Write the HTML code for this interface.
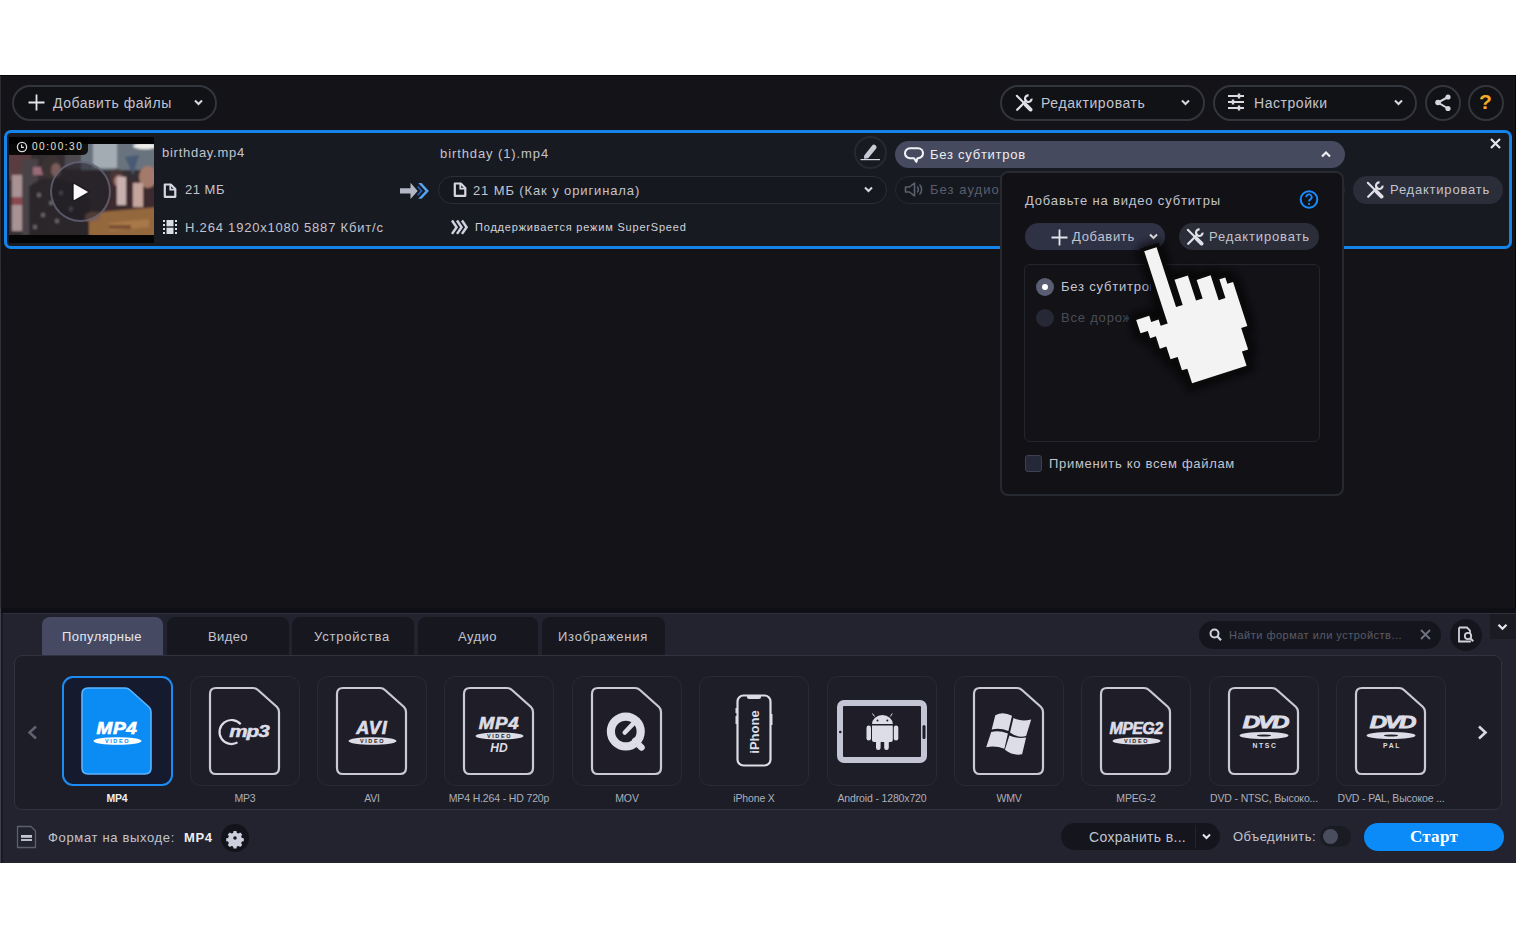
<!DOCTYPE html>
<html><head><meta charset="utf-8">
<style>
*{margin:0;padding:0;box-sizing:border-box}
html,body{width:1517px;height:939px;background:#fff;overflow:hidden;font-family:"Liberation Sans",sans-serif}
.a{position:absolute}
#app{position:absolute;left:0;top:75px;width:1516px;height:788px;background:#141418;border-top:1px solid #050506;border-right:1px solid #050506;overflow:hidden}
#app::before{content:"";position:absolute;left:0;top:0;width:1px;height:100%;background:linear-gradient(#2c2c32,#34363f)}
.t{position:absolute;white-space:nowrap;color:#c2c4cf;font-size:13px;line-height:16px}
.pill{position:absolute;border-radius:20px}
svg{position:absolute;overflow:visible}
</style></head><body>
<div id="app">
<!-- coordinates inside #app are page coords minus top 75 (border-top 1px handled via inner offset) -->
</div>
<!-- everything else absolutely positioned in page coords -->

<svg width="0" height="0" style="position:absolute"><defs>
<symbol id="tools" viewBox="0 0 18 18"><path d="M1.8 1.8L9.3 9.3" stroke="currentColor" stroke-width="2" stroke-linecap="round"/><path d="M10.8 10.8L15.6 15.6" stroke="currentColor" stroke-width="3.8" stroke-linecap="round"/><path d="M2.2 15.8L11.2 6.8" stroke="currentColor" stroke-width="2.3" stroke-linecap="round"/><path d="M16.6 4.6A3.3 3.3 0 1 1 13.6 1.4" stroke="currentColor" stroke-width="2.2" fill="none"/></symbol>
<symbol id="chev" viewBox="0 0 9 7"><path d="M1 1.5l3.5 3.5l3.5-3.5" stroke="currentColor" stroke-width="2" fill="none"/></symbol>
<symbol id="file" viewBox="0 0 14 15"><path d="M1.5 1.2h6.5l4.5 4.5v8h-11z" stroke="currentColor" stroke-width="1.7" fill="none" stroke-linejoin="round"/><path d="M7.5 1.2v5h5" stroke="currentColor" stroke-width="1.5" fill="none"/></symbol>
</defs></svg>
<div id="ov" class="a" style="left:0;top:0;width:1517px;height:939px">

<!-- TOOLBAR -->
<div class="pill" style="left:12px;top:85px;width:205px;height:36px;border:2px solid #33353c;background:#111216"></div>
<svg style="left:28px;top:94px" width="17" height="17"><path d="M8.5 0.5v16M0.5 8.5h16" stroke="#e4e5ec" stroke-width="1.8"/></svg>
<div class="t" style="left:53px;top:95px;font-size:14px;letter-spacing:0.55px">Добавить файлы</div>
<svg style="left:194px;top:99px" width="9" height="7"><path d="M1 1.5l3.5 3.5l3.5-3.5" stroke="#d8d9e0" stroke-width="2" fill="none"/></svg>

<div class="pill" style="left:1000px;top:85px;width:205px;height:36px;border:2px solid #33353c;background:#111216"></div>
<div class="t" style="left:1041px;top:95px;font-size:14px;letter-spacing:0.6px">Редактировать</div>
<svg style="left:1181px;top:99px" width="9" height="7"><path d="M1 1.5l3.5 3.5l3.5-3.5" stroke="#d8d9e0" stroke-width="2" fill="none"/></svg>

<div class="pill" style="left:1213px;top:85px;width:204px;height:36px;border:2px solid #33353c;background:#111216"></div>
<div class="t" style="left:1254px;top:95px;font-size:14px;letter-spacing:0.55px">Настройки</div>
<svg style="left:1394px;top:99px" width="9" height="7"><path d="M1 1.5l3.5 3.5l3.5-3.5" stroke="#d8d9e0" stroke-width="2" fill="none"/></svg>

<div class="pill" style="left:1425px;top:85px;width:36px;height:36px;border:2px solid #33353c;background:#111216"></div>
<div class="pill" style="left:1468px;top:85px;width:36px;height:36px;border:2px solid #33353c;background:#111216"></div>
<div class="t" style="left:1479px;top:91px;font-size:21px;line-height:22px;font-weight:bold;color:#f2aa2a">?</div>


<svg style="left:1015px;top:94px;color:#dfe0e8" width="18" height="18"><use href="#tools"/></svg>
<svg style="left:1227px;top:93px" width="18" height="17"><path d="M1 3h16M1 9h16M1 15h16" stroke="#d8d9e2" stroke-width="2.2"/><path d="M12 0.5v5M6 6.5v5M12 12.5v5" stroke="#d8d9e2" stroke-width="2.4"/></svg>
<svg style="left:1434px;top:94px" width="18" height="18"><path d="M14 3L4 8.5L14 14.5" stroke="#d4d5de" stroke-width="2" fill="none"/><circle cx="14" cy="3" r="2.6" fill="#d4d5de"/><circle cx="4" cy="8.5" r="2.8" fill="#d4d5de"/><circle cx="14" cy="14.5" r="2.6" fill="#d4d5de"/></svg>
<svg style="left:1392px;top:91px;color:#e6e7ee;position:absolute" width="0" height="0"></svg>
<!-- FILE ROW -->
<!--ROWBOX-->
<div class="a" style="left:4px;top:130px;width:1508px;height:119px;border:3px solid #1683ea;border-radius:7px;background:#181a22"></div>

<!-- thumbnail -->
<div class="a" style="left:9px;top:137px;width:145px;height:106px;background:#050505;overflow:hidden">
<svg style="left:0;top:0" width="145" height="106"><defs><filter id="tb" x="-10%" y="-10%" width="120%" height="120%"><feGaussianBlur stdDeviation="1.3"/></filter><clipPath id="tc"><rect x="0" y="7" width="145" height="91"/></clipPath></defs>
<g clip-path="url(#tc)"><g filter="url(#tb)">
<rect x="-5" y="0" width="155" height="110" fill="#352e31"/>
<rect x="72" y="0" width="78" height="33" fill="#69737e"/>
<rect x="84" y="4" width="24" height="27" fill="#a3abb3"/>
<rect x="56" y="8" width="16" height="24" fill="#4e4a50"/>
<ellipse cx="136" cy="9" rx="12" ry="3.2" fill="#ecece8"/>
<rect x="-2" y="15" width="24" height="28" fill="#5a3c40"/>
<rect x="3" y="38" width="10" height="56" fill="#a89294"/>
<rect x="3" y="60" width="10" height="8" fill="#8a4a50"/>
<rect x="13" y="22" width="16" height="76" fill="#4a4347"/>
<rect x="24" y="30" width="10" height="8" fill="#9a6a78"/>
<path d="M20 50Q28 40 50 42Q72 46 80 62L84 100H20Z" fill="#29272b"/>
<g fill="#66666a"><circle cx="30" cy="58" r="2.2"/><circle cx="42" cy="66" r="2.2"/><circle cx="34" cy="78" r="2.2"/><circle cx="52" cy="56" r="2.2"/><circle cx="48" cy="84" r="2.2"/><circle cx="62" cy="72" r="2.2"/><circle cx="26" cy="90" r="2.2"/></g>
<ellipse cx="42" cy="30" rx="10" ry="12" fill="#3a3030"/>
<ellipse cx="47" cy="33" rx="5" ry="7" fill="#7a5c58"/>
<rect x="96" y="44" width="50" height="36" fill="#3c2c2f"/>
<ellipse cx="108" cy="40" rx="7" ry="8" fill="#4a3636"/>
<ellipse cx="110" cy="44" rx="5" ry="6" fill="#a87a74"/>
<rect x="108" y="40" width="9" height="28" fill="#c9b0b0"/>
<path d="M116 20L130 18L124 38Z" fill="#4a5a74"/>
<ellipse cx="139" cy="40" rx="9" ry="11" fill="#a47a6c"/>
<rect x="124" y="46" width="10" height="24" fill="#c4a49c"/>
<path d="M80 76L150 70V100H80Z" fill="#94673c"/>
<path d="M100 86L140 82V90L100 94Z" fill="#a8784a"/>
<rect x="100" y="88" width="22" height="4" fill="#7a5030"/>
<ellipse cx="84" cy="80" rx="8" ry="5" fill="#86604a"/>
</g></g>
</svg>
  <div class="a" style="left:0;top:0;width:79px;height:18px;background:rgba(0,0,0,0.85);border-radius:0 0 5px 0"></div>
  <svg style="left:7px;top:4px" width="12" height="12"><circle cx="6" cy="6" r="4.6" stroke="#dcdcdc" stroke-width="1.3" fill="none"/><path d="M5.6 3.4v3h2.4" stroke="#dcdcdc" stroke-width="1.2" fill="none"/></svg>
  <div class="t" style="left:23px;top:3px;font-size:10px;line-height:14px;letter-spacing:1.55px;color:#eae4d8">00:00:30</div>
  <div class="a" style="left:41px;top:24px;width:61px;height:61px;border-radius:50%;background:rgba(28,26,34,0.5);border:2px solid rgba(120,118,140,0.65)"></div>
  <svg style="left:62px;top:44px" width="22" height="22"><path d="M2.5 2.5L17.5 11L2.5 19.5Z" fill="#fafafa" stroke="rgba(0,0,0,0.35)" stroke-width="2.5" stroke-linejoin="round"/><path d="M3.5 4L15.5 11L3.5 18Z" fill="#fafafa" stroke="#fafafa" stroke-width="1.2" stroke-linejoin="round"/></svg>
</div>

<div class="t" style="left:162px;top:145px;letter-spacing:0.73px">birthday.mp4</div>
<svg style="left:163px;top:183px" width="14" height="15"><path d="M1.8 1.5h6l4.5 4.5v7.8h-10.5z" stroke="#d6d7e2" stroke-width="2.2" fill="none" stroke-linejoin="round"/><path d="M7.3 1.5v5.2h5" stroke="#d6d7e2" stroke-width="1.8" fill="none"/></svg>
<div class="t" style="left:185px;top:182px;letter-spacing:0.5px">21 МБ</div>
<svg style="left:163px;top:220px" width="14" height="14"><path d="M0 0h2v2h-2zM0 4h2v2h-2zM0 8h2v2h-2zM0 12h2v2h-2zM12 0h2v2h-2zM12 4h2v2h-2zM12 8h2v2h-2zM12 12h2v2h-2z" fill="#dcdde6"/><rect x="3.5" y="0" width="7" height="6.3" fill="#dcdde6"/><rect x="3.5" y="7.7" width="7" height="6.3" fill="#dcdde6"/></svg>
<div class="t" style="left:185px;top:220px;letter-spacing:0.8px">H.264 1920x1080 5887 Кбит/с</div>

<!-- arrow -->
<svg style="left:399px;top:181px" width="32" height="19"><path d="M1 7.2h10.5v-5.5l7.2 8.2l-7.2 8.2v-5.5h-10.5z" fill="#b4b7c6"/><path d="M19.2 2h3.4l7.3 7.9l-7.3 7.9h-3.4l7.3-7.9z" fill="#56a4f0"/><path d="M18.6 5.5l4 4.4l-4 4.4" stroke="#1f64c0" stroke-width="1.6" fill="none"/></svg>

<div class="t" style="left:440px;top:146px;letter-spacing:0.9px">birthday (1).mp4</div>
<div class="pill" style="left:438px;top:176px;width:449px;height:28px;border:1.5px solid #2b2e37;background:#16181f"></div>
<svg style="left:453px;top:182px" width="14" height="15"><path d="M1.8 1.5h6l4.5 4.5v7.8h-10.5z" stroke="#d6d7e2" stroke-width="2.2" fill="none" stroke-linejoin="round"/><path d="M7.3 1.5v5.2h5" stroke="#d6d7e2" stroke-width="1.8" fill="none"/></svg>
<div class="t" style="left:473px;top:183px;letter-spacing:0.88px">21 МБ (Как у оригинала)</div>
<svg style="left:864px;top:186px" width="9" height="7"><path d="M1 1.5l3.5 3.5l3.5-3.5" stroke="#d8d9e0" stroke-width="2" fill="none"/></svg>

<svg style="left:450px;top:219px" width="19" height="16"><path d="M2 1.5l4.6 6.7l-4.6 6.7M7 1.5l4.6 6.7l-4.6 6.7M12 1.5l4.6 6.7l-4.6 6.7" stroke="#d0d1de" stroke-width="2.5" fill="none"/></svg>
<div class="t" style="left:475px;top:219px;font-size:11px;letter-spacing:0.8px;color:#d0d2dc">Поддерживается режим SuperSpeed</div>

<!-- pen button -->
<div class="pill" style="left:854px;top:136px;width:33px;height:33px;border:2px solid #272932;background:#181a22"></div>
<svg style="left:858px;top:141px" width="26" height="22"><path d="M6.2 14.6L14.2 4.6a2.2 2.2 0 0 1 3.2-0.3l0.3 0.3a2.2 2.2 0 0 1 0.3 3.2L10.2 17.2L6 17.8z" fill="#c8cad6"/><path d="M2.5 18.6h19.5" stroke="#d4d6e0" stroke-width="1.2"/></svg>

<!-- subtitles pill (open) -->
<div class="pill" style="left:895px;top:141px;width:450px;height:27px;background:#464a5e"></div>
<svg style="left:903px;top:146px" width="22" height="18"><path d="M7 2.2h8a5 5 0 0 1 0 10h-0.5l-1.2 3.6l-2.3-3.6h-4a5 5 0 0 1 0-10z" stroke="#f2f3f6" stroke-width="2.1" fill="none" stroke-linejoin="round"/></svg>
<div class="t" style="left:930px;top:147px;letter-spacing:0.75px;color:#eceef4">Без субтитров</div>
<svg style="left:1321px;top:151px" width="10" height="7"><path d="M1 5.5l4-4l4 4" stroke="#f0f0f4" stroke-width="2.2" fill="none"/></svg>

<!-- audio pill -->
<div class="pill" style="left:895px;top:176px;width:450px;height:28px;border:1.5px solid #272a33;background:#16181f"></div>
<svg style="left:904px;top:182px" width="19" height="15"><path d="M1.5 5h4l5-4v13l-5-4h-4z" stroke="#5c5f6c" stroke-width="1.6" fill="none" stroke-linejoin="round"/><path d="M13 4.5a4 4 0 0 1 0 6M15.5 2.5a7 7 0 0 1 0 10" stroke="#5c5f6c" stroke-width="1.5" fill="none"/></svg>
<div class="t" style="left:930px;top:182px;letter-spacing:1.05px;color:#5b5e6a">Без аудио</div>

<!-- close X -->
<svg style="left:1490px;top:138px" width="11" height="11"><path d="M1 1l9 9M10 1l-9 9" stroke="#e4e5ec" stroke-width="2.2"/></svg>

<!-- edit pill right -->
<div class="pill" style="left:1353px;top:176px;width:150px;height:28px;background:#2b2d39"></div>
<svg style="left:1366px;top:181px;color:#dfe0e8" width="18" height="18"><use href="#tools"/></svg>
<div class="t" style="left:1390px;top:182px;letter-spacing:0.78px">Редактировать</div>

<!-- POPUP -->
<div class="a" style="left:1000px;top:171px;width:344px;height:325px;border:2px solid #282a31;border-radius:8px;background:#111116"></div>
<div class="t" style="left:1025px;top:193px;letter-spacing:0.84px;color:#c2c4cf">Добавьте на видео субтитры</div>
<svg style="left:1298px;top:189px" width="22" height="22"><circle cx="11" cy="10.5" r="8.3" stroke="#1a8cff" stroke-width="2" fill="none"/><path d="M8.3 8.2a2.7 2.7 0 1 1 3.8 2.4c-0.8 0.4-1.1 0.9-1.1 1.8" stroke="#1a8cff" stroke-width="1.8" fill="none"/><circle cx="11" cy="15" r="1.1" fill="#1a8cff"/></svg>

<div class="pill" style="left:1025px;top:223px;width:140px;height:27px;background:#2f3245"></div>
<svg style="left:1051px;top:229px" width="17" height="17"><path d="M8.5 0.5v16M0.5 8.5h16" stroke="#e4e5ec" stroke-width="1.8"/></svg>
<div class="t" style="left:1072px;top:229px;letter-spacing:0.69px">Добавить</div>
<svg style="left:1149px;top:233px" width="9" height="7"><path d="M1 1.5l3.5 3.5l3.5-3.5" stroke="#e8e9ee" stroke-width="2" fill="none"/></svg>

<div class="pill" style="left:1179px;top:223px;width:140px;height:27px;background:#2b2d39"></div>
<svg style="left:1186px;top:228px;color:#dfe0e8" width="18" height="18"><use href="#tools"/></svg>
<div class="t" style="left:1209px;top:229px;letter-spacing:0.86px">Редактировать</div>

<div class="a" style="left:1024px;top:264px;width:296px;height:178px;border:1.5px solid #24262d;border-radius:6px;background:#121217"></div>
<div class="a" style="left:1036px;top:278px;width:18px;height:18px;border-radius:50%;background:#5a5e72"></div>
<div class="a" style="left:1042px;top:284px;width:6px;height:6px;border-radius:50%;background:#fff"></div>
<div class="t" style="left:1061px;top:279px;width:90px;overflow:hidden;letter-spacing:0.8px;color:#c4c6d2">Без субтитров</div>
<div class="a" style="left:1036px;top:309px;width:18px;height:18px;border-radius:50%;background:#262935"></div>
<div class="t" style="left:1061px;top:310px;width:68px;overflow:hidden;letter-spacing:0.8px;color:#4a4d58">Все дорожки</div>

<div class="a" style="left:1025px;top:455px;width:17px;height:17px;border-radius:3px;border:1.5px solid #3d4050;background:#252838"></div>
<div class="t" style="left:1049px;top:456px;letter-spacing:0.69px;color:#c2c4cf">Применить ко всем файлам</div>


<!-- BOTTOM PANEL -->
<div class="a" style="left:0;top:608px;width:1516px;height:5px;background:#0d0f15"></div>
<div class="a" style="left:0;top:613px;width:1516px;height:250px;background:#22232e;border-top:1px solid #2f313b"></div>
<div class="a" style="left:0;top:608px;width:1px;height:255px;background:#3c3e4a"></div><div class="a" style="left:1px;top:613px;width:2px;height:250px;background:#1a1b22"></div>

<!-- tabs -->
<div class="a" style="left:42px;top:617px;width:121px;height:40px;border-radius:8px 8px 0 0;background:#454a62"></div>
<div class="a" style="left:167px;top:617px;width:122px;height:40px;border-radius:8px 8px 0 0;background:#17181f"></div>
<div class="a" style="left:292px;top:617px;width:122px;height:40px;border-radius:8px 8px 0 0;background:#17181f"></div>
<div class="a" style="left:418px;top:617px;width:120px;height:40px;border-radius:8px 8px 0 0;background:#17181f"></div>
<div class="a" style="left:542px;top:617px;width:123px;height:40px;border-radius:8px 8px 0 0;background:#17181f"></div>
<div class="t" style="left:62px;top:629px;letter-spacing:0.45px;color:#e6e7ef">Популярные</div>
<div class="t" style="left:208px;top:629px;letter-spacing:0.4px;color:#c2c4cf">Видео</div>
<div class="t" style="left:314px;top:629px;letter-spacing:0.8px;color:#c2c4cf">Устройства</div>
<div class="t" style="left:458px;top:629px;letter-spacing:0.47px;color:#c2c4cf">Аудио</div>
<div class="t" style="left:558px;top:629px;letter-spacing:0.75px;color:#c2c4cf">Изображения</div>

<!-- search -->
<div class="pill" style="left:1199px;top:621px;width:242px;height:28px;background:#15161d"></div>
<svg style="left:1209px;top:628px" width="13" height="14"><circle cx="5.5" cy="5.5" r="4" stroke="#d0d1da" stroke-width="2" fill="none"/><path d="M8.5 8.5l3.5 3.8" stroke="#d0d1da" stroke-width="2.2"/></svg>
<div class="t" style="left:1229px;top:627px;font-size:11px;letter-spacing:0.49px;color:#585b68">Найти формат или устройств...</div>
<svg style="left:1420px;top:629px" width="11" height="11"><path d="M1 1l9 9M10 1l-9 9" stroke="#707380" stroke-width="1.8"/></svg>
<div class="pill" style="left:1450px;top:619px;width:32px;height:32px;background:#15161d"></div>
<svg style="left:1457px;top:626px" width="19" height="18"><path d="M2 1.5h8l3 3v3M13 14.5v1h-11v-14" stroke="#d0d1da" stroke-width="1.8" fill="none"/><circle cx="11" cy="10" r="3.2" stroke="#d0d1da" stroke-width="1.8" fill="none"/><path d="M13.3 12.3l3 3" stroke="#d0d1da" stroke-width="2"/></svg>
<div class="a" style="left:1490px;top:614px;width:26px;height:25px;background:#1a1b23"></div>
<svg style="left:1497px;top:623px;color:#e6e7ee" width="11" height="8"><use href="#chev"/></svg>

<!-- format panel -->
<div class="a" style="left:14px;top:655px;width:1488px;height:155px;border:1.5px solid #30323d;border-radius:8px;background:#1c1d26"></div>
<svg style="left:26px;top:725px" width="12" height="15"><path d="M10 1.5L3.5 7.5L10 13.5" stroke="#5f6270" stroke-width="2.6" fill="none"/></svg>
<svg style="left:1477px;top:725px" width="12" height="15"><path d="M2 1.5L8.5 7.5L2 13.5" stroke="#d8d9e2" stroke-width="2.6" fill="none"/></svg>

<!-- TILES -->
<div class="a" style="left:62px;top:676px;width:111px;height:110px;border:2px solid #1d8cf2;border-radius:11px;background:#151a2e"></div>
<svg style="left:81px;top:687px" width="72" height="89"><g transform="translate(1 1)"><path d="M6 0H43Q46 0 48 2L67 19Q69 21 69 24V80Q69 86 63 86H6Q0 86 0 80V6Q0 0 6 0Z" fill="#0b8cf5" stroke="#5cb4ff" stroke-width="1.6"/><text x="35" y="46" font-family="Liberation Sans" font-weight="bold" font-style="italic" font-size="17" text-anchor="middle" fill="#fff" stroke="#fff" stroke-width="0.7" letter-spacing="0.6" transform="translate(35 0) scale(1.12 1) translate(-35 0)">MP4</text><ellipse cx="35.5" cy="53" rx="24" ry="3.8" fill="#fff"/><text x="35.5" y="55" font-family="Liberation Sans" font-weight="bold" font-size="5.5" letter-spacing="1.6" text-anchor="middle" fill="#0a8cf5">VIDEO</text></g></svg>
<div class="t" style="left:52px;top:791px;width:130px;text-align:center;font-size:10.5px;line-height:14px;letter-spacing:-0.15px;font-weight:bold;color:#eeeff4">MP4</div>
<div class="a" style="left:190px;top:676px;width:110px;height:110px;border:1.5px solid #282a34;border-radius:11px;background:#1d1e27"></div>
<svg style="left:209px;top:687px" width="72" height="89"><g transform="translate(1 1)"><path d="M6 0H43Q46 0 48 2L67 19Q69 21 69 24V80Q69 86 63 86H6Q0 86 0 80V6Q0 0 6 0Z" fill="#1f1d27" stroke="#c9cad6" stroke-width="2.2"/><path d="M27.5 54.4A12 12 0 1 1 30.7 36.3" stroke="#dcdde6" stroke-width="2.2" fill="none"/><text x="39" y="49.5" font-family="Liberation Sans" font-weight="bold" font-style="italic" font-size="17" text-anchor="middle" fill="#dcdde6" stroke="#dcdde6" stroke-width="0.5" letter-spacing="-0.8" transform="translate(39 0) scale(1.22 1) translate(-39 0)">mp3</text></g></svg>
<div class="t" style="left:180px;top:791px;width:130px;text-align:center;font-size:10.5px;line-height:14px;letter-spacing:-0.15px;color:#adafbb">MP3</div>
<div class="a" style="left:317px;top:676px;width:110px;height:110px;border:1.5px solid #282a34;border-radius:11px;background:#1d1e27"></div>
<svg style="left:336px;top:687px" width="72" height="89"><g transform="translate(1 1)"><path d="M6 0H43Q46 0 48 2L67 19Q69 21 69 24V80Q69 86 63 86H6Q0 86 0 80V6Q0 0 6 0Z" fill="#1f1d27" stroke="#c9cad6" stroke-width="2.2"/><text x="35" y="46" font-family="Liberation Sans" font-weight="bold" font-style="italic" font-size="18" text-anchor="middle" fill="#dcdde6" stroke="#dcdde6" stroke-width="0.7" letter-spacing="1">AVI</text><ellipse cx="35.5" cy="53" rx="24" ry="3.8" fill="#dcdde6"/><text x="35.5" y="55" font-family="Liberation Sans" font-weight="bold" font-size="5.5" letter-spacing="1.6" text-anchor="middle" fill="#1e1e27">VIDEO</text></g></svg>
<div class="t" style="left:307px;top:791px;width:130px;text-align:center;font-size:10.5px;line-height:14px;letter-spacing:-0.15px;color:#adafbb">AVI</div>
<div class="a" style="left:444px;top:676px;width:110px;height:110px;border:1.5px solid #282a34;border-radius:11px;background:#1d1e27"></div>
<svg style="left:463px;top:687px" width="72" height="89"><g transform="translate(1 1)"><path d="M6 0H43Q46 0 48 2L67 19Q69 21 69 24V80Q69 86 63 86H6Q0 86 0 80V6Q0 0 6 0Z" fill="#1f1d27" stroke="#c9cad6" stroke-width="2.2"/><text x="35" y="41" font-family="Liberation Sans" font-weight="bold" font-style="italic" font-size="17" text-anchor="middle" fill="#dcdde6" stroke="#dcdde6" stroke-width="0.6" letter-spacing="0.6" transform="translate(35 0) scale(1.1 1) translate(-35 0)">MP4</text><ellipse cx="35.5" cy="48" rx="24" ry="3.6" fill="#dcdde6"/><text x="35.5" y="50" font-family="Liberation Sans" font-weight="bold" font-size="5.5" letter-spacing="1.6" text-anchor="middle" fill="#1e1e27">VIDEO</text><text x="35" y="64" font-family="Liberation Sans" font-weight="bold" font-style="italic" font-size="12" text-anchor="middle" fill="#dcdde6">HD</text></g></svg>
<div class="t" style="left:434px;top:791px;width:130px;text-align:center;font-size:10.5px;line-height:14px;letter-spacing:-0.15px;color:#adafbb">MP4 H.264 - HD 720p</div>
<div class="a" style="left:572px;top:676px;width:110px;height:110px;border:1.5px solid #282a34;border-radius:11px;background:#1d1e27"></div>
<svg style="left:591px;top:687px" width="72" height="89"><g transform="translate(1 1)"><path d="M6 0H43Q46 0 48 2L67 19Q69 21 69 24V80Q69 86 63 86H6Q0 86 0 80V6Q0 0 6 0Z" fill="#1f1d27" stroke="#c9cad6" stroke-width="2.2"/><circle cx="33.8" cy="43.5" r="14.9" stroke="#dcdde6" stroke-width="8.2" fill="none"/><path d="M43 53l6.5 6.5" stroke="#dcdde6" stroke-width="6.5" stroke-linecap="round"/><path d="M32.8 44.5l8.2-8.6" stroke="#dcdde6" stroke-width="4.6" stroke-linecap="round"/></g></svg>
<div class="t" style="left:562px;top:791px;width:130px;text-align:center;font-size:10.5px;line-height:14px;letter-spacing:-0.15px;color:#adafbb">MOV</div>
<div class="a" style="left:699px;top:676px;width:110px;height:110px;border:1.5px solid #282a34;border-radius:11px;background:#1d1e27"></div>
<svg style="left:736px;top:694px" width="38" height="74"><rect x="1.5" y="1.5" width="33" height="70" rx="6" stroke="#dcdde6" stroke-width="2.2" fill="#1d1e27"/><path d="M11 1.5h14v1.5a2 2 0 0 1-2 2h-10a2 2 0 0 1-2-2z" fill="#dcdde6"/><rect x="-0.5" y="14" width="1.5" height="5" fill="#dcdde6"/><rect x="-0.5" y="22" width="1.5" height="8" fill="#dcdde6"/><rect x="35" y="20" width="1.5" height="11" fill="#dcdde6"/><text transform="translate(23 38) rotate(-90)" font-family="Liberation Sans" font-weight="bold" font-size="13" text-anchor="middle" fill="#dcdde6">iPhone</text></svg>
<div class="t" style="left:689px;top:791px;width:130px;text-align:center;font-size:10.5px;line-height:14px;letter-spacing:-0.15px;color:#adafbb">iPhone X</div>
<div class="a" style="left:827px;top:676px;width:110px;height:110px;border:1.5px solid #282a34;border-radius:11px;background:#1d1e27"></div>
<svg style="left:837px;top:700px" width="92" height="65"><rect x="3" y="3" width="84" height="57" rx="4" stroke="#c4c5d4" stroke-width="6" fill="#1f1e28"/><circle cx="3.3" cy="32" r="1.3" fill="#1d1e27"/><rect x="85.5" y="25" width="3" height="14" rx="1.5" fill="#1d1e27"/><path d="M35 24a10.4 9 0 0 1 20.8 0z" fill="#dcdde6"/><path d="M37.5 16.5l-2-3M53.3 16.5l2-3" stroke="#dcdde6" stroke-width="1"/><circle cx="40.5" cy="20.5" r="1" fill="#1f1e28"/><circle cx="50.3" cy="20.5" r="1" fill="#1f1e28"/><path d="M35 25.5h20.8v14.5a2 2 0 0 1-2 2h-16.8a2 2 0 0 1-2-2z" fill="#dcdde6"/><rect x="29.5" y="25.5" width="4.5" height="15" rx="2.2" fill="#dcdde6"/><rect x="56.8" y="25.5" width="4.5" height="15" rx="2.2" fill="#dcdde6"/><rect x="39" y="40" width="4.6" height="10" rx="2.2" fill="#dcdde6"/><rect x="47.2" y="40" width="4.6" height="10" rx="2.2" fill="#dcdde6"/></svg>
<div class="t" style="left:817px;top:791px;width:130px;text-align:center;font-size:10.5px;line-height:14px;letter-spacing:-0.15px;color:#adafbb">Android - 1280x720</div>
<div class="a" style="left:954px;top:676px;width:110px;height:110px;border:1.5px solid #282a34;border-radius:11px;background:#1d1e27"></div>
<svg style="left:973px;top:687px" width="72" height="89"><g transform="translate(1 1)"><path d="M6 0H43Q46 0 48 2L67 19Q69 21 69 24V80Q69 86 63 86H6Q0 86 0 80V6Q0 0 6 0Z" fill="#1f1d27" stroke="#c9cad6" stroke-width="2.2"/><path d="M21.3 27.3Q29 23 38 27.8L34.4 43Q26 39.5 17.7 41.5Z" fill="#dcdde6"/><path d="M39.5 29.9Q47 34 57.2 31.4L52.1 48Q44 50.5 36 44.5Z" fill="#dcdde6"/><path d="M17.2 44Q25 42 33.9 45.5L30.4 60.7Q21 57 12.2 59.2Z" fill="#dcdde6"/><path d="M35.4 47.6Q43 51 52.1 49.6L48.1 66.3Q39 68 30.9 61.7Z" fill="#dcdde6"/></g></svg>
<div class="t" style="left:944px;top:791px;width:130px;text-align:center;font-size:10.5px;line-height:14px;letter-spacing:-0.15px;color:#adafbb">WMV</div>
<div class="a" style="left:1081px;top:676px;width:110px;height:110px;border:1.5px solid #282a34;border-radius:11px;background:#1d1e27"></div>
<svg style="left:1100px;top:687px" width="72" height="89"><g transform="translate(1 1)"><path d="M6 0H43Q46 0 48 2L67 19Q69 21 69 24V80Q69 86 63 86H6Q0 86 0 80V6Q0 0 6 0Z" fill="#1f1d27" stroke="#c9cad6" stroke-width="2.2"/><text x="35" y="46" font-family="Liberation Sans" font-weight="bold" font-style="italic" font-size="16" text-anchor="middle" fill="#dcdde6" stroke="#dcdde6" stroke-width="0.6" letter-spacing="-0.6">MPEG2</text><ellipse cx="35.5" cy="53" rx="24" ry="3.6" fill="#dcdde6"/><text x="35.5" y="55" font-family="Liberation Sans" font-weight="bold" font-size="5.5" letter-spacing="1.6" text-anchor="middle" fill="#1e1e27">VIDEO</text></g></svg>
<div class="t" style="left:1071px;top:791px;width:130px;text-align:center;font-size:10.5px;line-height:14px;letter-spacing:-0.15px;color:#adafbb">MPEG-2</div>
<div class="a" style="left:1209px;top:676px;width:110px;height:110px;border:1.5px solid #282a34;border-radius:11px;background:#1d1e27"></div>
<svg style="left:1228px;top:687px" width="72" height="89"><g transform="translate(1 1)"><path d="M6 0H43Q46 0 48 2L67 19Q69 21 69 24V80Q69 86 63 86H6Q0 86 0 80V6Q0 0 6 0Z" fill="#1f1d27" stroke="#c9cad6" stroke-width="2.2"/><text x="36" y="40" font-family="Liberation Sans" font-weight="bold" font-style="italic" font-size="17" text-anchor="middle" fill="#dcdde6" stroke="#dcdde6" stroke-width="0.9" letter-spacing="-1.5" transform="translate(36 0) scale(1.42 1) translate(-36 0)">DVD</text><ellipse cx="35" cy="47.5" rx="24.5" ry="3.6" fill="#dcdde6"/><ellipse cx="35" cy="47.5" rx="7" ry="1.1" fill="#1e1e27"/><text x="36" y="60" font-family="Liberation Sans" font-weight="bold" font-size="6.8" letter-spacing="1.6" text-anchor="middle" fill="#dcdde6">NTSC</text></g></svg>
<div class="t" style="left:1199px;top:791px;width:130px;text-align:center;font-size:10.5px;line-height:14px;letter-spacing:-0.15px;color:#adafbb">DVD - NTSC, Высоко...</div>
<div class="a" style="left:1336px;top:676px;width:110px;height:110px;border:1.5px solid #282a34;border-radius:11px;background:#1d1e27"></div>
<svg style="left:1355px;top:687px" width="72" height="89"><g transform="translate(1 1)"><path d="M6 0H43Q46 0 48 2L67 19Q69 21 69 24V80Q69 86 63 86H6Q0 86 0 80V6Q0 0 6 0Z" fill="#1f1d27" stroke="#c9cad6" stroke-width="2.2"/><text x="36" y="40" font-family="Liberation Sans" font-weight="bold" font-style="italic" font-size="17" text-anchor="middle" fill="#dcdde6" stroke="#dcdde6" stroke-width="0.9" letter-spacing="-1.5" transform="translate(36 0) scale(1.42 1) translate(-36 0)">DVD</text><ellipse cx="35" cy="47.5" rx="24.5" ry="3.6" fill="#dcdde6"/><ellipse cx="35" cy="47.5" rx="7" ry="1.1" fill="#1e1e27"/><text x="36" y="60" font-family="Liberation Sans" font-weight="bold" font-size="6.8" letter-spacing="1.6" text-anchor="middle" fill="#dcdde6">PAL</text></g></svg>
<div class="t" style="left:1326px;top:791px;width:130px;text-align:center;font-size:10.5px;line-height:14px;letter-spacing:-0.15px;color:#adafbb">DVD - PAL, Высокое ...</div>
<!-- /TILES -->
<!-- bottom bar -->
<svg style="left:16px;top:825px" width="22" height="25"><path d="M1.5 1.5h13.5l4.5 4.5v16.5h-18z" stroke="#5c5f6c" stroke-width="1.3" fill="none" stroke-linejoin="round"/><rect x="5" y="10" width="11" height="2.8" fill="#c4c6d2"/><rect x="5" y="14" width="11" height="2" fill="#b8bac6"/></svg>
<div class="t" style="left:48px;top:830px;letter-spacing:0.66px;color:#c2c4cf">Формат на выходе:</div>
<div class="t" style="left:184px;top:830px;letter-spacing:0.62px;font-weight:bold;color:#eeeff4">MP4</div>
<div class="pill" style="left:221px;top:824px;width:28px;height:28px;background:#13141b"></div>
<svg style="left:225px;top:828px" width="20" height="20"><g transform="translate(10 10) scale(0.88)"><path d="M-1.6 -8h3.2l0.5 2.2l1.9 0.8l1.9-1.2l2.3 2.3l-1.2 1.9l0.8 1.9l2.2 0.5v3.2l-2.2 0.5l-0.8 1.9l1.2 1.9l-2.3 2.3l-1.9-1.2l-1.9 0.8l-0.5 2.2h-3.2l-0.5-2.2l-1.9-0.8l-1.9 1.2l-2.3-2.3l1.2-1.9l-0.8-1.9l-2.2-0.5v-3.2l2.2-0.5l0.8-1.9l-1.2-1.9l2.3-2.3l1.9 1.2l1.9-0.8z" fill="#cdd0dc"/><circle r="2" fill="#13141b"/></g></svg>

<div class="pill" style="left:1061px;top:823px;width:159px;height:27px;background:#15161d"></div>
<div class="a" style="left:1195px;top:825px;width:1px;height:23px;background:#23252e"></div>
<div class="t" style="left:1089px;top:829px;font-size:14px;letter-spacing:0.32px;color:#c2c4cf">Сохранить в...</div>
<svg style="left:1202px;top:833px;color:#e6e7ee" width="9" height="7"><use href="#chev"/></svg>
<div class="t" style="left:1233px;top:829px;letter-spacing:0.47px;color:#c2c4cf">Объединить:</div>
<div class="pill" style="left:1320px;top:826px;width:31px;height:21px;background:#1a1b23"></div>
<div class="a" style="left:1323px;top:829px;width:15px;height:15px;border-radius:50%;background:#4a4d5e"></div>
<div class="pill" style="left:1364px;top:823px;width:140px;height:28px;background:#0a8bf8"></div>
<div class="t" style="left:1364px;top:827px;width:140px;text-align:center;font-family:'Liberation Serif',serif;font-weight:bold;font-size:17px;line-height:20px;color:#fff;letter-spacing:0.3px">Старт</div>

<!-- HAND -->
<svg style="left:0;top:0" width="1517" height="939"><defs><filter id="hs" x="-30%" y="-30%" width="160%" height="160%"><feGaussianBlur stdDeviation="4"/></filter></defs>
<g transform="translate(1144.2,251.2) rotate(-18)">
<path d="M0.0 0.0 L13.0 0.0 L13.0 63.0 L20.0 63.0 L20.0 36.6 L34.0 36.6 L34.0 63.0 L41.0 63.0 L41.0 43.5 L55.7 43.5 L55.7 69.6 L62.8 69.6 L62.8 50.0 L69.0 50.0 L69.0 56.7 L75.0 56.7 L75.0 103.0 L68.5 103.0 L68.5 125.5 L62.0 125.5 L62.0 140.5 L4.7 140.5 L4.7 125.0 L-0.9 125.0 L-0.9 111.0 L-8.4 111.0 L-8.4 97.5 L-15.2 97.5 L-15.2 84.6 L-21.2 84.6 L-21.2 77.0 L-28.9 77.0 L-28.9 63.0 L-15.2 63.0 L-15.2 69.5 L-7.4 69.5 L-7.4 76.0 L0.0 76.0 Z" fill="rgba(0,0,0,0.6)" stroke="rgba(0,0,0,0.6)" stroke-width="14" filter="url(#hs)"/>
<path d="M0.0 0.0 L13.0 0.0 L13.0 63.0 L20.0 63.0 L20.0 36.6 L34.0 36.6 L34.0 63.0 L41.0 63.0 L41.0 43.5 L55.7 43.5 L55.7 69.6 L62.8 69.6 L62.8 50.0 L69.0 50.0 L69.0 56.7 L75.0 56.7 L75.0 103.0 L68.5 103.0 L68.5 125.5 L62.0 125.5 L62.0 140.5 L4.7 140.5 L4.7 125.0 L-0.9 125.0 L-0.9 111.0 L-8.4 111.0 L-8.4 97.5 L-15.2 97.5 L-15.2 84.6 L-21.2 84.6 L-21.2 77.0 L-28.9 77.0 L-28.9 63.0 L-15.2 63.0 L-15.2 69.5 L-7.4 69.5 L-7.4 76.0 L0.0 76.0 Z" fill="#f3f3f3" stroke="#0a0a0a" stroke-width="7" stroke-linejoin="miter" paint-order="stroke"/>
</g></svg>

</div>
</body></html>
